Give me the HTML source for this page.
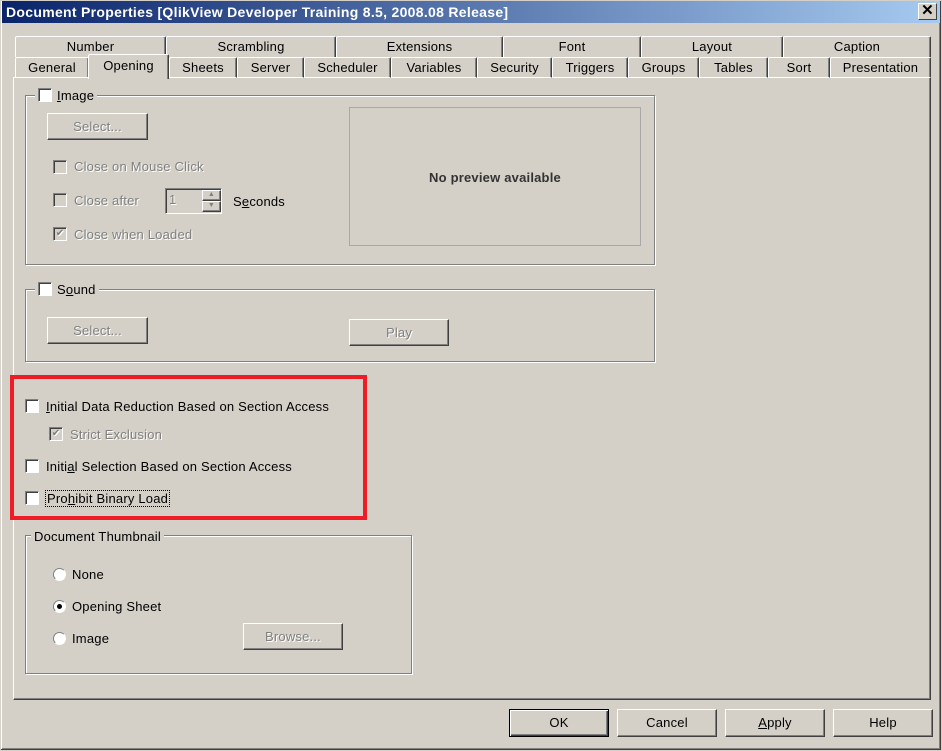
<!DOCTYPE html>
<html><head><meta charset="utf-8"><style>
*{box-sizing:border-box;margin:0;padding:0}
body{width:942px;height:751px;background:#d4d0c8;font-family:"Liberation Sans",Tahoma,sans-serif;font-size:13px;letter-spacing:0.2px;color:#000;position:relative;overflow:hidden}
.a{position:absolute}
.win{left:0;top:0;width:942px;height:751px;border:1px solid #d4d0c8;box-shadow:inset -1px -1px #404040,inset 1px 1px #fff,inset -2px -2px #808080}
.title{left:2px;top:1px;width:938px;height:22px;background:linear-gradient(to right,#0a246a,#a6caf0);color:#fff;font-weight:bold;font-size:14px;padding:3px 0 0 4px;white-space:nowrap;letter-spacing:0.3px}
.close{left:918px;top:3px;width:19px;height:17px;background:#d4d0c8;border:1px solid;border-color:#fff #404040 #404040 #fff;text-align:center;font-size:15px;line-height:14px;font-weight:bold;color:#000}
.tab{height:21px;border:1px solid;border-color:#fff #404040 transparent #fff;border-bottom:none;text-align:center;line-height:20px;box-shadow:inset -1px 0 #808080;border-radius:2px 2px 0 0}
.panel{left:13px;top:77px;width:918px;height:623px;border:1px solid;border-color:#fff #404040 #404040 #fff;box-shadow:inset -1px -1px #808080}
.grp{border:1px solid #808080;box-shadow:1px 1px #fff,inset 1px 1px #fff}
.lbl{background:#d4d0c8;padding:0 3px;white-space:nowrap}
.cb{width:14px;height:14px;background:#fff;border:1px solid;border-color:#808080 #fff #fff #808080;box-shadow:inset 1px 1px #404040}
.cb.dis{background:#d4d0c8}
.btn{border:1px solid;border-color:#fff #404040 #404040 #fff;box-shadow:inset -1px -1px #808080;text-align:center;line-height:25px}
.dis{color:#808080;text-shadow:1px 1px #fff}
.rad{width:13px;height:13px;border-radius:50%;background:#fff;border:1px solid;border-color:#808080 #fff #fff #808080}
u{text-decoration:underline}
</style></head><body>
<div class="a win"></div>
<div class="a title">Document Properties [QlikView Developer Training 8.5, 2008.08 Release]</div>
<div class="a close">✕</div>

<div class="a tab" style="left:15px;top:36px;width:151px">Number</div>
<div class="a tab" style="left:166px;top:36px;width:170px">Scrambling</div>
<div class="a tab" style="left:336px;top:36px;width:167px">Extensions</div>
<div class="a tab" style="left:503px;top:36px;width:138px">Font</div>
<div class="a tab" style="left:641px;top:36px;width:142px">Layout</div>
<div class="a tab" style="left:783px;top:36px;width:148px">Caption</div>

<div class="a panel"></div>
<div class="a tab" style="left:15px;top:57px;width:74px;border-bottom:1px solid #fff">General</div>
<div class="a tab" style="left:169px;top:57px;width:68px;border-bottom:1px solid #fff">Sheets</div>
<div class="a tab" style="left:237px;top:57px;width:67px;border-bottom:1px solid #fff">Server</div>
<div class="a tab" style="left:304px;top:57px;width:87px;border-bottom:1px solid #fff">Scheduler</div>
<div class="a tab" style="left:391px;top:57px;width:86px;border-bottom:1px solid #fff">Variables</div>
<div class="a tab" style="left:477px;top:57px;width:75px;border-bottom:1px solid #fff">Security</div>
<div class="a tab" style="left:552px;top:57px;width:76px;border-bottom:1px solid #fff">Triggers</div>
<div class="a tab" style="left:628px;top:57px;width:71px;border-bottom:1px solid #fff">Groups</div>
<div class="a tab" style="left:699px;top:57px;width:69px;border-bottom:1px solid #fff">Tables</div>
<div class="a tab" style="left:768px;top:57px;width:62px;border-bottom:1px solid #fff">Sort</div>
<div class="a tab" style="left:830px;top:57px;width:101px;border-bottom:1px solid #fff">Presentation</div>
<div class="a tab" style="left:88px;top:54px;width:81px;height:25px;background:#d4d0c8;line-height:22px">Opening</div>

<!-- Image group -->
<div class="a grp" style="left:25px;top:95px;width:630px;height:170px"></div>
<div class="a lbl" style="left:35px;top:88px;height:16px"><span class="cb" style="display:inline-block;vertical-align:-2px;margin-right:5px"></span><u>I</u>mage</div>
<div class="a btn dis" style="left:47px;top:113px;width:101px;height:27px">Select...</div>
<div class="a" style="left:349px;top:107px;width:292px;height:139px;border:1px solid #a8a8a8;text-align:center;line-height:140px;font-weight:bold;color:#333">No preview available</div>
<div class="a cb dis" style="left:53px;top:160px"></div><div class="a dis" style="left:74px;top:159px">Close on Mouse Click</div>
<div class="a cb dis" style="left:53px;top:193px"></div><div class="a dis" style="left:74px;top:193px">Close after</div>
<div class="a" style="left:165px;top:188px;width:57px;height:26px;border:1px solid;border-color:#808080 #fff #fff #808080;box-shadow:inset 1px 1px #404040"></div>
<div class="a dis" style="left:169px;top:192px">1</div>
<div class="a btn" style="left:202px;top:190px;width:19px;height:11px;line-height:8px;font-size:7px;color:#808080">▲</div>
<div class="a btn" style="left:202px;top:201px;width:19px;height:11px;line-height:8px;font-size:7px;color:#808080">▼</div>
<div class="a" style="left:233px;top:194px">S<u>e</u>conds</div>
<div class="a cb dis" style="left:53px;top:227px;text-align:center;font-size:10px;line-height:11px;color:#808080">✔</div><div class="a dis" style="left:74px;top:227px">Close when Loaded</div>

<!-- Sound group -->
<div class="a grp" style="left:25px;top:289px;width:630px;height:73px"></div>
<div class="a lbl" style="left:35px;top:282px;height:16px"><span class="cb" style="display:inline-block;vertical-align:-2px;margin-right:5px"></span>S<u>o</u>und</div>
<div class="a btn dis" style="left:47px;top:317px;width:101px;height:27px">Select...</div>
<div class="a btn dis" style="left:349px;top:319px;width:100px;height:27px">Play</div>

<!-- red box -->
<div class="a" style="left:10px;top:375px;width:357px;height:145px;border:4px solid #ee1c25"></div>
<div class="a cb" style="left:25px;top:399px"></div><div class="a" style="left:46px;top:399px"><u>I</u>nitial Data Reduction Based on Section Access</div>
<div class="a cb dis" style="left:49px;top:427px;text-align:center;font-size:10px;line-height:11px;color:#808080">✔</div><div class="a dis" style="left:70px;top:427px">Strict Exclusion</div>
<div class="a cb" style="left:25px;top:459px"></div><div class="a" style="left:46px;top:459px">Initi<u>a</u>l Selection Based on Section Access</div>
<div class="a cb" style="left:25px;top:491px"></div><div class="a" style="left:45px;top:490px;border:1px dotted #000;padding:0 1px">Pro<u>h</u>ibit Binary Load</div>

<!-- thumbnail -->
<div class="a grp" style="left:25px;top:535px;width:387px;height:139px"></div>
<div class="a lbl" style="left:31px;top:529px">Document Thumbnail</div>
<div class="a rad" style="left:53px;top:568px"></div><div class="a" style="left:72px;top:567px">None</div>
<div class="a rad" style="left:53px;top:600px"></div><div class="a" style="left:57px;top:604px;width:5px;height:5px;border-radius:50%;background:#000"></div><div class="a" style="left:72px;top:599px">Opening Sheet</div>
<div class="a rad" style="left:53px;top:632px"></div><div class="a" style="left:72px;top:631px">Image</div>
<div class="a btn dis" style="left:243px;top:623px;width:100px;height:27px">Browse...</div>

<!-- bottom buttons -->
<div class="a btn" style="left:509px;top:709px;width:100px;height:28px;border:1px solid #000;box-shadow:inset 1px 1px #fff,inset -1px -1px #404040,inset -2px -2px #808080">OK</div>
<div class="a btn" style="left:617px;top:709px;width:100px;height:28px">Cancel</div>
<div class="a btn" style="left:725px;top:709px;width:100px;height:28px"><u>A</u>pply</div>
<div class="a btn" style="left:833px;top:709px;width:100px;height:28px">Help</div>
</body></html>
